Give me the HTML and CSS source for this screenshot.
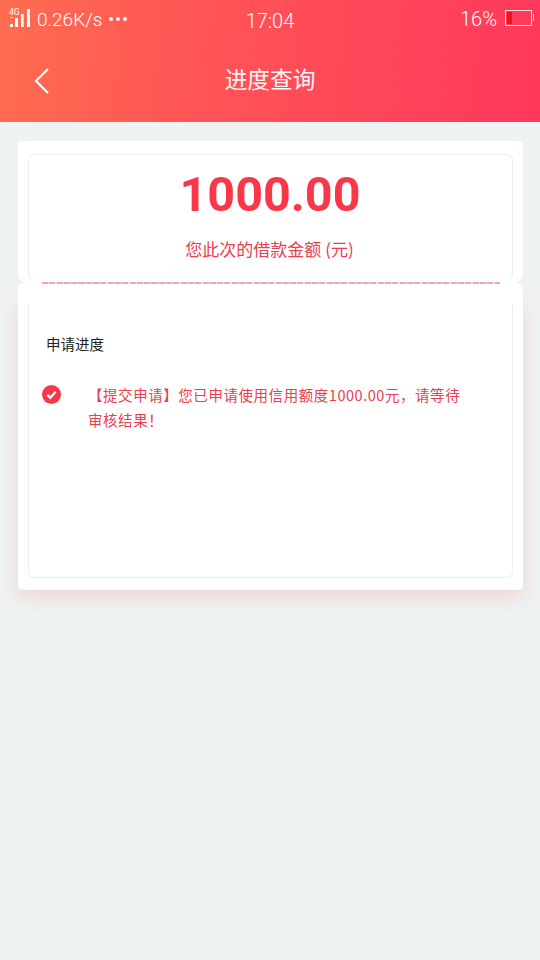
FILE: index.html
```html
<!DOCTYPE html>
<html lang="zh-CN">
<head>
  <meta charset="UTF-8">
  <title>进度查询</title>
  <link rel="stylesheet" href="styles.css">
</head>
<body>
  <div class="header">
    <div class="status-bar">
      <div class="status-left">
        <svg class="signal" width="22" height="19" viewBox="0 0 22 19">
          <text x="0" y="6.5" class="signal-label">4G</text>
          <rect x="1" y="16" width="3" height="3" fill="#fff"/>
          <rect x="1" y="9" width="3" height="1" fill="#fff" opacity=".7"/>
          <rect x="6" y="10" width="3" height="9" fill="#fff"/>
          <rect x="12" y="6" width="2.6" height="13" fill="#fff"/>
          <rect x="18" y="1" width="3" height="18" fill="#fff"/>
        </svg>
        <span class="speed">0.26K/s</span>
        <span class="dots"><i></i><i></i><i></i></span>
      </div>
      <div class="status-time">17:04</div>
      <div class="status-right">
        <span class="percent">16%</span>
        <span class="battery"><i></i></span>
        <span class="battery-tip"></span>
      </div>
    </div>
    <div class="nav">
      <svg class="back" width="18" height="28" viewBox="0 0 18 28">
        <path d="M15 2 L3 14 L15 26" fill="none" stroke="#fff" stroke-width="2.2"/>
      </svg>
      <div class="nav-title">进度查询</div>
    </div>
  </div>

  <div class="content">
    <div class="card card-top">
      <div class="inner inner-top">
        <div class="amount">1000.00</div>
        <div class="amount-label">您此次的借款金额 (元)</div>
        <div class="dash"></div>
      </div>
    </div>
    <div class="card card-bottom">
      <div class="inner inner-bottom">
        <div class="progress-title">申请进度</div>
        <div class="step">
          <svg class="step-icon" width="19" height="19" viewBox="0 0 19 19">
            <circle cx="9.5" cy="9.5" r="9.5" fill="#f93748"/>
            <path d="M5.3 9.8 L8.3 12.8 L13.6 6.8" fill="none" stroke="#fff" stroke-width="2.2"/>
          </svg>
          <p class="step-text">【提交申请】您已申请使用信用额度1000.00元，请等待审核结果！</p>
        </div>
      </div>
    </div>
  </div>
</body>
</html>
```

FILE: styles.css
```css
* {
  box-sizing: border-box;
}
body {
  margin: 0;
  width: 540px;
  height: 960px;
  overflow: hidden;
  background-color: #eff2f3;
  font-family: "Noto Sans CJK SC", Roboto, sans-serif;
}
.header {
  height: 122px;
  background-image: linear-gradient(95deg, #ff6c50 0%, #ff5756 33%, #ff385c 100%);
  color: #fff;
}
.status-bar {
  display: grid;
  grid-template-columns: 1fr auto 1fr;
  align-items: center;
  height: 40px;
  padding: 0 6px 0 9px;
  font-family: Roboto, sans-serif;
  font-size: 19px;
  font-weight: 300;
}
.status-left {
  display: flex;
  align-items: center;
}
.signal {
  margin-top: -5px;
}
.signal-label {
  font-family: Roboto, sans-serif;
  font-size: 8.5px;
  font-weight: 400;
  fill: #fff;
}
.speed {
  margin: -2px 0 0 6px;
}
.dots {
  display: flex;
  gap: 3px;
  margin: -2px 0 0 7px;
}
.dots i {
  width: 4px;
  height: 4px;
  border-radius: 50%;
  background-color: #fff;
}
.status-time {
  margin: 2px 3px 0 0;
  font-size: 20px;
}
.status-right {
  display: flex;
  align-items: center;
  justify-content: flex-end;
  margin-top: -5px;
  font-size: 20px;
}
.percent {
  margin-top: 2px;
}
.battery {
  width: 27px;
  height: 16px;
  margin-left: 8px;
  padding: 1px;
  border: 1px solid #ffd9dc;
}
.battery i {
  display: block;
  width: 5px;
  height: 100%;
  background-color: #f5101f;
}
.battery-tip {
  width: 1px;
  height: 7px;
  margin-left: 1px;
  background-color: #ffd9dc;
}
.nav {
  position: relative;
  display: flex;
  align-items: center;
  justify-content: center;
  height: 82px;
}
.back {
  position: absolute;
  left: 33px;
  top: 27px;
}
.nav-title {
  margin-top: -5px;
  font-size: 22.7px;
  font-weight: 400;
  opacity: .95;
}
.content {
  padding: 19px 17px 0 18px;
}
.card {
  background-color: #fff;
}
.card-top {
  position: relative;
  z-index: 1;
  height: 142px;
  padding: 13px 10px 0;
  border-radius: 4px 4px 9px 9px;
}
.card-bottom {
  position: relative;
  height: 307px;
  padding: 21px 10px 12px;
  border-radius: 6px;
}
.card-bottom::before {
  content: '';
  position: absolute;
  top: 21px;
  left: 0;
  right: 0;
  bottom: 0;
  z-index: -1;
  box-shadow: 0 6px 18px rgba(240, 170, 150, .4);
}
.inner {
  border: 1px solid #eeeeee;
}
.inner-top {
  height: 129px;
  border-bottom: 0;
  border-radius: 6px 6px 9px 9px;
  display: flex;
  flex-direction: column;
  align-items: center;
}
.inner-bottom {
  height: 274px;
  border-top: 0;
  border-radius: 0 0 6px 6px;
  padding: 30px 14px 0 17px;
}
.amount {
  margin: 10px 1px 0 0;
  font-family: Roboto, sans-serif;
  font-size: 48.5px;
  font-weight: 700;
  line-height: 60px;
  color: #f93748;
}
.amount-label {
  margin: 12px 2px 0 0;
  font-size: 17px;
  line-height: 24px;
  color: #e8404f;
}
.dash {
  flex: none;
  width: 458px;
  height: 2px;
  margin-top: auto;
  margin-bottom: -1px;
  background-image: repeating-linear-gradient(90deg, #f7a3aa 0, #f7a3aa 6px, #fde3e5 6px, #fde3e5 7.3px);
}
.progress-title {
  font-size: 14.5px;
  line-height: 20px;
  color: #222;
}
.step {
  display: flex;
  align-items: flex-start;
  margin-top: 29px;
  margin-left: -4px;
}
.step-icon {
  flex: none;
  margin-top: 2px;
}
.step-text {
  width: 380px;
  margin: -1px 0 0 27px;
  font-size: 14.5px;
  letter-spacing: .55px;
  line-height: 25px;
  color: #e8404f;
}
```
